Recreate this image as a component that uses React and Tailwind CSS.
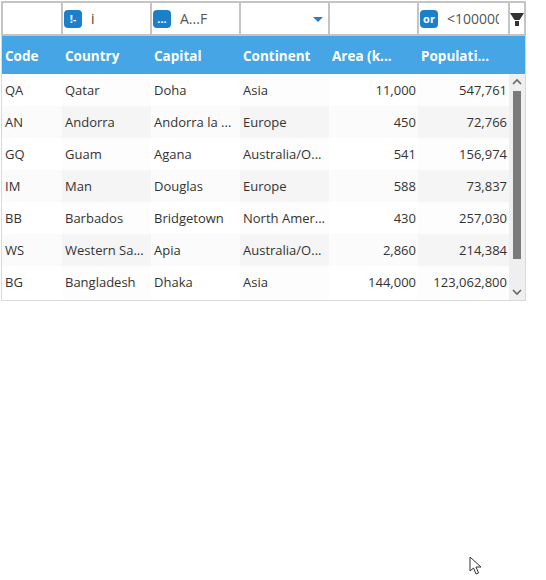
import React from "react";

const widths = ["w-[60px]", "w-[89px]", "w-[89px]", "w-[89px]", "w-[89px]", "w-[91px]"];
const headers = ["Code", "Country", "Capital", "Continent", "Area (k...", "Populati..."];
const rows = [
  ["QA", "Qatar", "Doha", "Asia", "11,000", "547,761"],
  ["AN", "Andorra", "Andorra la ...", "Europe", "450", "72,766"],
  ["GQ", "Guam", "Agana", "Australia/O...", "541", "156,974"],
  ["IM", "Man", "Douglas", "Europe", "588", "73,837"],
  ["BB", "Barbados", "Bridgetown", "North Amer...", "430", "257,030"],
  ["WS", "Western Sa...", "Apia", "Australia/O...", "2,860", "214,384"],
  ["BG", "Bangladesh", "Dhaka", "Asia", "144,000", "123,062,800"],
];

function Badge({ children }) {
  return (
    <span className="flex h-[18px] w-[18px] shrink-0 items-center justify-center rounded-[4px] bg-[#1b7fcc] text-[11px] font-bold leading-none text-white">
      {children}
    </span>
  );
}

function FilterCell({ className, children }) {
  return (
    <div className={`flex h-full items-center border-2 border-l-0 border-[#c4c4c4] first:border-l-2 ${className}`}>
      {children}
    </div>
  );
}

function App() {
  return (
    <div className="relative h-[580px] w-[546px] bg-white font-['Open_Sans',sans-serif] text-[13px] text-[#333]">
      <div className="flex h-[36px] pl-px pt-px">
        <FilterCell className="w-[62px]" />
        <FilterCell className="w-[89px] pl-px">
          <Badge>!-</Badge>
          <span className="ml-[9px] text-[14px] text-[#5b3a2e]">i</span>
        </FilterCell>
        <FilterCell className="w-[89px] pl-px">
          <Badge>...</Badge>
          <span className="ml-[9px] text-[14px] text-[#555]">A...F</span>
        </FilterCell>
        <FilterCell className="w-[89px] justify-end pr-[5px]">
          <svg width="10" height="6" viewBox="0 0 10 6" className="mt-[2px]">
            <path d="M0 0h10L5 5z" fill="#2a7fc4" />
          </svg>
        </FilterCell>
        <FilterCell className="w-[89px]" />
        <FilterCell className="w-[91px] pl-px">
          <Badge>or</Badge>
          <span className="ml-[9px] w-[52px] overflow-hidden whitespace-nowrap text-[14px] text-[#555]">&lt;100000</span>
        </FilterCell>
        <div className="flex h-full w-[16px] items-center justify-center border-y-2 border-r-2 border-[#c4c4c4]">
          <svg width="14" height="14" viewBox="0 0 14 14" className="mt-[3px]">
            <path d="M0 0h14L9.5 7h-5zM5 8h4v5H5z" fill="#333" />
          </svg>
        </div>
      </div>

      <div className="ml-px w-[525px] border border-t-0 border-[#d9d9d9]">
        <div className="flex h-[38px] items-center bg-[#46a5e4] pt-[2px] text-[13.5px] font-bold text-white">
          {headers.map((h, i) => (
            <div key={h} className={`${widths[i]} pl-[3px] whitespace-nowrap`}>
              {h}
            </div>
          ))}
        </div>
        <div className="flex h-[226px]">
          <div className="w-[507px]">
            {rows.map((row, r) => (
              <div key={row[0]} className="flex h-[32px]">
                {row.map((cell, c) => {
                  const shade = r % 2 === 1 ? (c % 2 === 1 ? "bg-[#f5f5f5]" : "bg-[#fbfbfb]") : c % 2 === 1 ? "bg-[#fdfdfd]" : "bg-white";
                  return (
                    <div
                      key={c}
                      className={`${widths[c]} ${shade} ${c > 3 ? "justify-end pr-[2px]" : "pl-[3px]"} flex items-center whitespace-nowrap pt-[2px]`}
                    >
                      {cell}
                    </div>
                  );
                })}
              </div>
            ))}
          </div>
          <div className="flex w-[16px] flex-col items-center bg-[#efefef]">
            <svg width="12" height="17" viewBox="0 0 12 17" className="shrink-0">
              <path d="M2 10l4-4 4 4" fill="none" stroke="#666" strokeWidth="1.6" />
            </svg>
            <div className="h-[168px] w-[8px] bg-[#7a7a7a]" />
            <div className="flex-1" />
            <svg width="12" height="16" viewBox="0 0 12 16" className="shrink-0">
              <path d="M2 6l4 4 4-4" fill="none" stroke="#666" strokeWidth="1.6" />
            </svg>
          </div>
        </div>
      </div>

      <svg width="14" height="20" viewBox="0 0 14 20" className="absolute left-[469px] top-[556px]">
        <path d="M1 1v14l3.5-3 2.5 6 2.5-1-2.5-6h5z" fill="#fff" stroke="#333" strokeWidth="1" />
      </svg>
    </div>
  );
}

export default App;
